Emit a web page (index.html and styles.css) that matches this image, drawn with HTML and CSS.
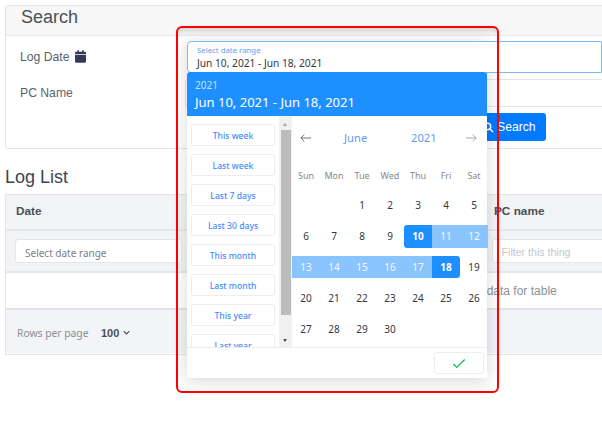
FILE: index.html
```html
<!DOCTYPE html>
<html lang="en">
<head>
<meta charset="utf-8">
<title>Log List</title>
<link rel="stylesheet" href="styles.css">
</head>
<body>
<main class="page">
  <section class="card">
    <h2 class="card-head">Search</h2>
    <div class="card-body">
      <div class="field field-date">
        <label>Log Date</label>
        <svg class="cal-icon" viewBox="0 0 448 512"><path d="M0 464c0 26.5 21.5 48 48 48h352c26.500 0 48-21.500 48-48V192H0v272zM400 64h-48V16c0-8.800-7.200-16-16-16h-32c-8.800 0-16 7.200-16 16v48H160V16c0-8.800-7.200-16-16-16h-32c-8.800 0-16 7.200-16 16v48H48C21.500 64 0 85.500 0 112v48h448v-48c0-26.500-21.500-48-48-48z"/></svg>
      </div>
      <div class="field field-pc">
        <label>PC Name</label>
        <div class="text-input"></div>
      </div>
      <div class="actions">
        <button class="search-btn">
          <svg viewBox="0 0 16 16" class="search-icon"><circle cx="6.500" cy="6.500" r="4.700"/><path d="M10 10l4.500 4.500"/></svg>
          Search
        </button>
      </div>
    </div>
  </section>

  <h2 class="list-title">Log List</h2>

  <section class="table">
    <div class="row row-head">
      <span class="th">Date</span>
      <span class="th">PC name</span>
    </div>
    <div class="row row-filter">
      <div class="filter filter-date">Select date range</div>
      <div class="filter filter-pc">Filter this thing</div>
    </div>
    <div class="row-empty"><span>No data for table</span></div>
    <div class="row-foot">
      <span class="rows-label">Rows per page</span>
      <span class="rows-value">100</span>
      <svg class="chev" viewBox="0 0 10 6"><path d="M1 1l4 4 4-4"/></svg>
    </div>
  </section>
</main>

<div class="picker">
  <div class="picker-input">
    <span class="picker-label">Select date range</span>
    <span class="picker-value">Jun 10, 2021 - Jun 18, 2021</span>
  </div>
  <div class="panel">
    <header class="panel-head">
      <div class="panel-year">2021</div>
      <div class="panel-range">Jun 10, 2021 - Jun 18, 2021</div>
    </header>
    <div class="panel-main">
      <aside class="shortcuts">
        <div class="shortcut-list">
          <button class="shortcut">This week</button>
          <button class="shortcut">Last week</button>
          <button class="shortcut">Last 7 days</button>
          <button class="shortcut">Last 30 days</button>
          <button class="shortcut">This month</button>
          <button class="shortcut">Last month</button>
          <button class="shortcut">This year</button>
          <button class="shortcut">Last year</button>
        </div>
        <div class="scrollbar">
          <i class="arrow-up"></i>
          <b class="thumb"></b>
          <i class="arrow-down"></i>
        </div>
      </aside>
      <div class="calendar">
        <div class="cal-nav">
          <svg class="nav-arrow" viewBox="0 0 14 10"><path d="M13 5H1M5 1L1 5l4 4"/></svg>
          <span class="cal-month">June</span>
          <span class="cal-year">2021</span>
          <svg class="nav-arrow nav-next" viewBox="0 0 14 10"><path d="M1 5h12M9 1l4 4-4 4"/></svg>
        </div>
        <div class="weekdays">
          <span>Sun</span><span>Mon</span><span>Tue</span><span>Wed</span><span>Thu</span><span>Fri</span><span>Sat</span>
        </div>
        <div class="days">
          <span></span><span></span><span>1</span><span>2</span><span>3</span><span>4</span><span>5</span>
          <span>6</span><span>7</span><span>8</span><span>9</span><span class="start">10</span><span class="mid">11</span><span class="mid">12</span>
          <span class="mid">13</span><span class="mid">14</span><span class="mid">15</span><span class="mid">16</span><span class="mid">17</span><span class="end">18</span><span>19</span>
          <span>20</span><span>21</span><span>22</span><span>23</span><span>24</span><span>25</span><span>26</span>
          <span>27</span><span>28</span><span>29</span><span>30</span>
        </div>
      </div>
    </div>
    <footer class="panel-foot">
      <button class="ok-btn">
        <svg viewBox="0 0 16 12"><path d="M1.500 6.500l4 4 9-9"/></svg>
      </button>
    </footer>
  </div>
</div>
<div class="frame"></div>
</body>
</html>
```
FILE: styles.css
```css
* { box-sizing: border-box; }
html, body { margin: 0; height: 100%; overflow: hidden; background: #fff; }
body { font-family: "Liberation Sans", Arial, sans-serif; color: #495057; position: relative; }
button { font: inherit; cursor: pointer; }

.page { width: 620px; padding: 5px 0 0 5px; }

.card { height: 144px; border: 1px solid #e3e4e6; border-radius: 3px; display: flex; flex-direction: column; }
.card-head { margin: 0; height: 30px; padding: 0 15px; font-size: 18px; line-height: 23px; font-weight: 400; background: #f7f7f7; border-bottom: 1px solid #e8e8e8; }
.card-body { flex: 1; position: relative; padding: 0 14px; display: flex; flex-direction: column; }
.field { display: flex; align-items: center; font-size: 12.200px; color: #59636d; }
.field-date { height: 21px; margin-top: 10px; gap: 6px; }
.cal-icon { width: 11px; height: 13px; fill: #343a56; }
.field-pc { height: 28px; margin-top: 12px; justify-content: space-between; }
.text-input { width: 420px; height: 28px; border: 1px solid #e4e6e8; border-radius: 3px; }
.actions { margin-top: 6px; display: flex; padding-left: 458px; }
.search-btn { width: 68px; height: 28px; border: 0; border-radius: 3px; background: #007bff; color: #fff; font-size: 12.200px; display: flex; align-items: center; gap: 3px; padding: 0 0 0 5px; }
.search-icon { width: 11px; height: 11px; fill: none; stroke: #fff; stroke-width: 2.200; }

.list-title { margin: 17px 0 5px; font-size: 18px; line-height: 23px; font-weight: 400; color: #3c4650; }

.table { height: 161px; border: 1px solid #e3e4e8; }
.row { display: flex; background: #f3f4f8; }
.row-head { height: 36px; padding-bottom: 2px; align-items: center; font-weight: 700; font-size: 11.800px; color: #4a4f55; border-bottom: 2px solid #e6e7ea; }
.th:first-child { margin-left: 10px; width: 478px; }
.row-filter { height: 42px; align-items: center; border-bottom: 2px solid #e6e7ea; }
.filter { height: 24px; background: #fff; border: 1px solid #e4e6ea; border-radius: 3px; font-size: 10px; line-height: 27px; padding-left: 9px; font-family: "Noto Sans", sans-serif; }
.filter-date { margin-left: 9px; width: 170px; color: #7c7f84; }
.filter-pc { margin-left: 310px; width: 130px; color: #c4c6c9; font-family: "Liberation Sans", sans-serif; font-size: 10.600px; line-height: 24px; }
.row-empty { height: 37px; padding-left: 462px; display: flex; align-items: center; font-size: 12px; color: #8c9196; border-bottom: 2px solid #e2e3e8; }
.row-foot { height: 43px; padding-top: 2px; background: #f3f4f8; display: flex; align-items: center; padding-left: 11px; font-size: 11px; }
.rows-label { color: #8b8e93; width: 84px; font-family: "Noto Sans", sans-serif; font-size: 10.300px; }
.rows-value { font-weight: 700; color: #4a4f55; font-size: 11px; }
.chev { width: 7px; height: 5px; margin-left: 4px; fill: none; stroke: #4a4f55; stroke-width: 1.600; }

/* Date picker overlay */
.picker { position: absolute; left: 187px; top: 41px; width: 300px; height: 337px; box-shadow: 0 3px 16px rgba(0,0,0,.16); font-family: "Noto Sans", sans-serif; }
.picker-input { width: 415px; height: 32px; background: #fff; border: 1px solid #7db9f5; border-radius: 4px 0 0 4px; padding: 3px 9px 0; display: flex; flex-direction: column; position: relative; }
.picker-label { font-size: 7.800px; line-height: 11px; color: #5f9df7; }
.picker-value { font-size: 10.200px; line-height: 15px; color: #33373c; }
.panel { margin-top: -1px; height: 306px; background: #fff; display: flex; flex-direction: column; position: relative; border-radius: 3px; }
.panel-head { height: 44px; background: #1e8fff; color: #fff; padding: 6px 8px 0; border-radius: 3px 3px 0 0; flex: none; }
.panel-year { font-size: 10px; line-height: 15px; color: #c7e2ff; }
.panel-range { font-size: 13px; line-height: 18px; }
.panel-main { flex: 1; min-height: 0; display: flex; }
.shortcuts { width: 105px; display: flex; overflow: hidden; }
.shortcut-list { width: 92px; padding: 8px 4px 0; display: flex; flex-direction: column; gap: 8px; flex: none; }
.shortcut { height: 22px; flex: none; width: 84px; padding: 2px 0 0; background: #fff; border: 1px solid #ebedf0; border-radius: 3px; font-size: 8.600px; color: #3f8cff; font-weight: 500; }
.scrollbar { width: 13px; background: #f1f1f1; display: flex; flex-direction: column; align-items: center; position: relative; padding: 14px 1px 0 1px; }
.thumb { width: 10px; height: 185px; background: #bcbcbc; display: block; }
.arrow-up, .arrow-down { position: absolute; left: 4px; width: 0; height: 0; border-left: 2.500px solid transparent; border-right: 2.500px solid transparent; }
.arrow-up { top: 7px; border-bottom: 3px solid #a3a3a3; }
.arrow-down { bottom: 5px; border-top: 3px solid #505050; }

.calendar { width: 195px; display: flex; flex-direction: column; }
.cal-nav { height: 44px; padding-bottom: 1px; display: flex; align-items: center; color: #5f9df7; font-size: 11.200px; padding-left: 8px; }
.nav-arrow { width: 12px; height: 10px; fill: none; stroke: #55595e; stroke-width: 1; flex: none; }
.nav-next { stroke: #9a9da1; margin-left: 29px; }
.cal-month { margin-left: 32px; width: 67px; }
.cal-year { width: 25px; }
.weekdays { display: grid; grid-template-columns: repeat(7, 28px); height: 30px; margin-top: 0; font-size: 9px; color: #85888c; text-align: center; align-items: center; }
.days { display: grid; grid-template-columns: repeat(7, 28px); grid-auto-rows: 22.800px; row-gap: 8px; margin-top: 4px; font-size: 10px; color: #33373c; }
.days span { display: flex; align-items: center; justify-content: center; }
.mid { background: #8ac4ff; color: #f2f8ff; }
.start, .end { background: #1e8fff; color: #fff; font-weight: 700; }
.start { border-radius: 3px 0 0 3px; }
.end { border-radius: 0 3px 3px 0; }

.panel-foot { height: 31px; flex: none; border-top: 1px solid #ececee; display: flex; justify-content: flex-end; align-items: center; padding-right: 3px; }
.ok-btn { width: 50px; height: 22px; background: #fff; border: 1px solid #ebedf0; border-radius: 3px; padding: 0; display: flex; align-items: center; justify-content: center; }
.ok-btn svg { width: 14px; height: 11px; fill: none; stroke: #0fbf55; stroke-width: 1.500; }

.frame { position: absolute; left: 176px; top: 26px; width: 323px; height: 367px; border: 2px solid #f00; border-radius: 6px; box-shadow: inset 0 7px 7px -5px rgba(0,0,0,.18); pointer-events: none; }
```
